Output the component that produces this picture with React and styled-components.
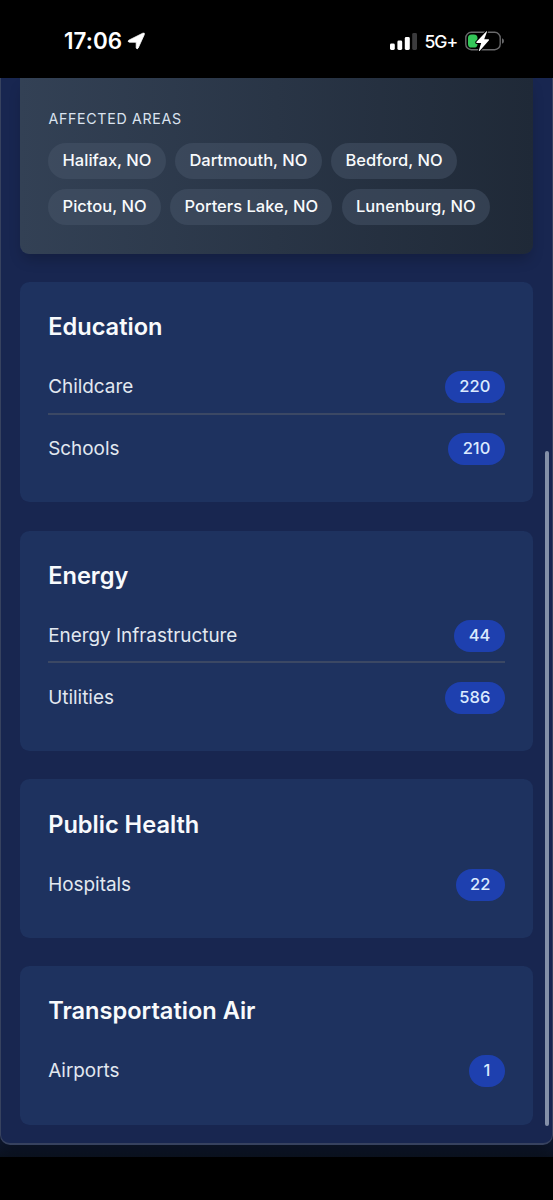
import React from "react";
import styled, { createGlobalStyle } from "styled-components";

const GlobalStyle = createGlobalStyle`
  * {
    box-sizing: border-box;
  }

  body {
    margin: 0;
    background: #000000;
    font-family: Inter, sans-serif;
  }
`;

const Screen = styled.div`
  display: flex;
  flex-direction: column;
  width: 553px;
  height: 1200px;
  background: #000000;
  overflow: hidden;
`;

const StatusBar = styled.header`
  display: flex;
  justify-content: space-between;
  align-items: center;
  height: 78px;
  flex-shrink: 0;
  padding: 4px 48px 0 64px;
  color: #ffffff;
`;

const StatusGroup = styled.div`
  display: flex;
  align-items: center;
  gap: ${(props) => props.$gap}px;
`;

const Clock = styled.span`
  font-size: 22.4px;
  font-weight: 600;
  letter-spacing: 0.05px;
  line-height: 26px;
`;

const Network = styled.span`
  font-size: 17.6px;
  font-weight: 500;
  letter-spacing: -1px;
  line-height: 26px;
  padding-top: 1px;
`;

const Viewport = styled.div`
  height: 1079px;
  flex-shrink: 0;
  background: linear-gradient(#0e182f 1066px, #0b1220);
  overflow: hidden;
`;

const Panel = styled.main`
  position: relative;
  display: flex;
  flex-direction: column;
  gap: 28.4px;
  height: 1067px;
  padding: 0 18.5px 0 18.8px;
  border: 1.5px solid #37425f;
  border-width: 0 1.5px 2px;
  border-radius: 0 0 10px 10px;
  background: #182650;
  box-shadow: 0 8px 14px rgba(0, 0, 0, 0.25);
`;

const Scrollbar = styled.div`
  position: absolute;
  top: 373px;
  right: 2.6px;
  width: 4px;
  height: 675px;
  border-radius: 2px;
  background: #8490a8;
`;

const Summary = styled.section`
  height: 175.6px;
  flex-shrink: 0;
  margin-right: 0.6px;
  padding: 31.6px 28.6px 0;
  border-radius: 0 0 9px 9px;
  background: linear-gradient(90deg, #334155, #1f2937);
  box-shadow: 0 8px 14px -3px rgba(0, 0, 0, 0.22);
`;

const SummaryLabel = styled.h3`
  margin: 0 0 15px;
  color: #dbe3ef;
  font-size: 14.2px;
  font-weight: 400;
  letter-spacing: 0.7px;
  line-height: 18px;
  text-transform: uppercase;
`;

const Chips = styled.div`
  display: flex;
  flex-wrap: wrap;
  gap: 9.6px;
`;

const Chip = styled.span`
  padding: 0 14.2px 1.2px;
  border-radius: 19px;
  background: rgba(71, 85, 105, 0.5);
  color: #f8fafc;
  font-size: 16.5px;
  font-weight: 500;
  line-height: 35.2px;
`;

const Card = styled.section`
  flex-shrink: 0;
  margin-right: 0.6px;
  padding: 28.4px 28.4px 27.9px;
  border-radius: 9.5px;
  background: #1e325f;
`;

const CardTitle = styled.h2`
  margin: 0 0 18.6px;
  color: #f8fafc;
  font-size: 23.6px;
  font-weight: 600;
  line-height: 33.2px;
`;

const Rows = styled.div`
  display: flex;
  flex-direction: column;
  gap: 9.4px;
`;

const Row = styled.div`
  display: flex;
  justify-content: space-between;
  align-items: center;
  padding: 9.2px 0;
  color: #e2e8f0;
  font-size: 18.9px;
  line-height: 28px;

  &:not(:last-child) {
    border-bottom: 2px solid #3b4864;
  }
`;

const Count = styled.span`
  padding: 0 14.2px 1px;
  border-radius: 16px;
  background: #1e40af;
  color: #dbeafe;
  font-size: 16.5px;
  font-weight: 500;
  line-height: 31px;
`;

const areas = [
  "Halifax, NO",
  "Dartmouth, NO",
  "Bedford, NO",
  "Pictou, NO",
  "Porters Lake, NO",
  "Lunenburg, NO",
];

const categories = [
  {
    title: "Education",
    items: [
      { name: "Childcare", count: 220 },
      { name: "Schools", count: 210 },
    ],
  },
  {
    title: "Energy",
    items: [
      { name: "Energy Infrastructure", count: 44 },
      { name: "Utilities", count: 586 },
    ],
  },
  { title: "Public Health", items: [{ name: "Hospitals", count: 22 }] },
  { title: "Transportation Air", items: [{ name: "Airports", count: 1 }] },
];

const LocationIcon = () => (
  <svg width="19" height="18" viewBox="0 0 19 18">
    <path
      d="M1.8 8.2 15.8 1.2Q18 .5 17.3 2.6L11.2 16Q10 17.8 9.2 16V10.2H2.4Q.2 9.6 1.8 8.2Z"
      fill="#fff"
      stroke="#fff"
      strokeWidth="0.8"
      strokeLinejoin="round"
    />
  </svg>
);

const SignalIcon = () => (
  <svg width="27" height="17" viewBox="0 0 27 17">
    <rect x="0" y="10.5" width="4.8" height="6.5" rx="1.4" fill="#fff" />
    <rect x="7.4" y="7.5" width="4.8" height="9.5" rx="1.4" fill="#fff" />
    <rect x="14.8" y="4" width="5" height="13" rx="1.4" fill="#fff" />
    <rect x="22.2" y="0" width="4.8" height="17" rx="1.4" fill="#3b3b3d" />
  </svg>
);

const BatteryIcon = () => (
  <svg width="40" height="22" viewBox="0 0 40 22">
    <rect
      x="0.8"
      y="2.3"
      width="34.4"
      height="17.4"
      rx="5.5"
      fill="none"
      stroke="#69696b"
      strokeWidth="1.4"
    />
    <path d="M37 8.2Q39 9 39 11T37 13.8Z" fill="#69696b" />
    <rect x="3" y="4.5" width="9.5" height="13" rx="3.6" fill="#34c759" />
    <path
      d="M21.5 1.2 11.3 12.1Q11 13 12 13H16.2L13.8 20.5Q14 21.3 14.8 20.7L24 10.3Q24.3 9.4 23.3 9.3H19.2L22 1.8Q22 .9 21.5 1.2Z"
      fill="#fff"
      stroke="#000"
      strokeWidth="2"
      paintOrder="stroke"
    />
  </svg>
);

const App = () => {
  return (
    <>
      <GlobalStyle />
      <Screen>
        <StatusBar>
          <StatusGroup $gap={5}>
            <Clock>17:06</Clock>
            <LocationIcon />
          </StatusGroup>
          <StatusGroup $gap={7.8}>
            <SignalIcon />
            <Network>5G+</Network>
            <BatteryIcon />
          </StatusGroup>
        </StatusBar>
        <Viewport>
          <Panel>
            <Summary>
              <SummaryLabel>Affected areas</SummaryLabel>
              <Chips>
                {areas.map((area) => (
                  <Chip key={area}>{area}</Chip>
                ))}
              </Chips>
            </Summary>
            {categories.map((category) => (
              <Card key={category.title}>
                <CardTitle>{category.title}</CardTitle>
                <Rows>
                  {category.items.map((item) => (
                    <Row key={item.name}>
                      {item.name}
                      <Count>{item.count}</Count>
                    </Row>
                  ))}
                </Rows>
              </Card>
            ))}
            <Scrollbar />
          </Panel>
        </Viewport>
      </Screen>
    </>
  );
};

export default App;
